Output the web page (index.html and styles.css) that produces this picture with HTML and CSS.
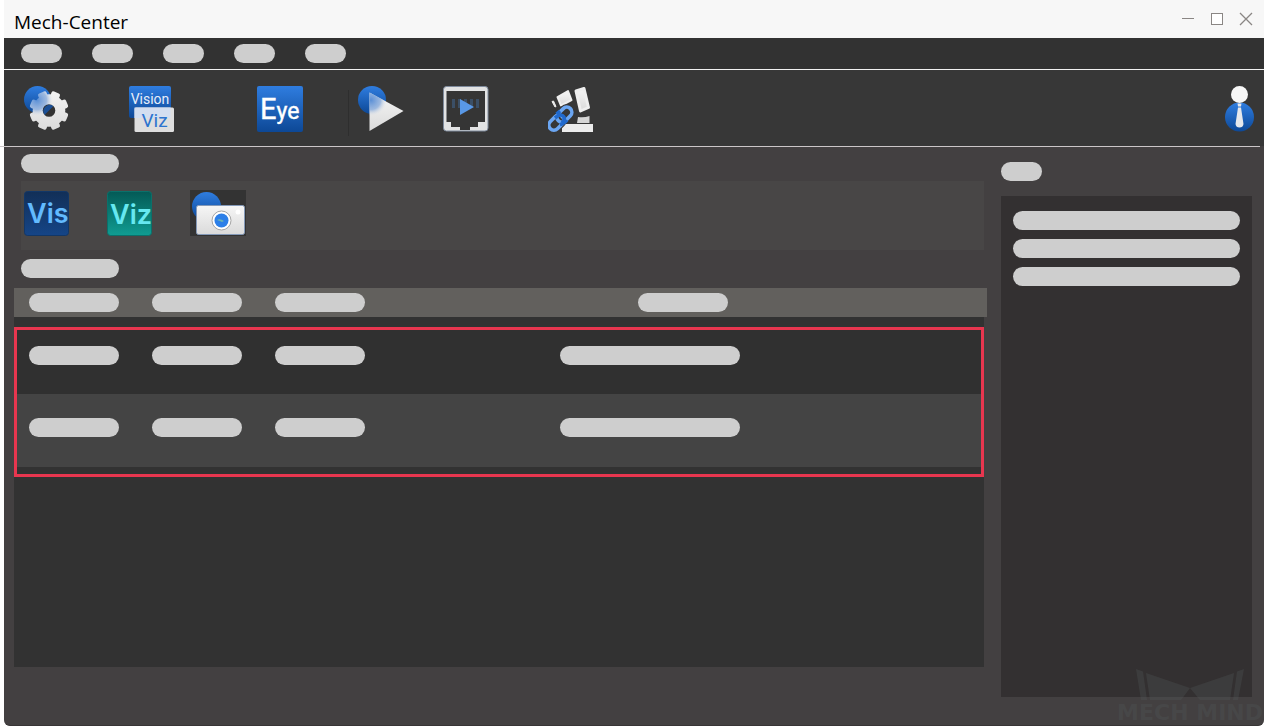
FILE: index.html
```html
<!DOCTYPE html>
<html lang="en">
<head>
    <meta charset="UTF-8">
    <meta name="viewport" content="width=device-width, initial-scale=1.0">
    <title>Mech-Center</title>
    <link rel="stylesheet" href="styles.css">
</head>
<body>
    <div class="window">
        <header class="titlebar">
            <h1>Mech-Center</h1>
            <div class="window-controls">
                <button type="button" aria-label="Minimize">
                    <svg width="14" height="14" viewBox="0 0 14 14"><path d="M1 6.500h12" stroke="#8a8684"/></svg>
                </button>
                <button type="button" aria-label="Maximize">
                    <svg width="14" height="14" viewBox="0 0 14 14"><rect x="1.500" y="1.500" width="11" height="11" fill="#fff" stroke="#8a8684"/></svg>
                </button>
                <button type="button" aria-label="Close">
                    <svg width="14" height="14" viewBox="0 0 14 14"><path d="M1 1l12 12M13 1L1 13" stroke="#8a8684" stroke-width="1.300"/></svg>
                </button>
            </div>
        </header>

        <nav class="menubar">
            <button type="button" class="pill pill-menu" aria-label="Menu 1"></button>
            <button type="button" class="pill pill-menu" aria-label="Menu 2"></button>
            <button type="button" class="pill pill-menu" aria-label="Menu 3"></button>
            <button type="button" class="pill pill-menu" aria-label="Menu 4"></button>
            <button type="button" class="pill pill-menu" aria-label="Menu 5"></button>
        </nav>

        <div class="toolbar">
            <button type="button" aria-label="Settings">
                <svg width="46" height="46" viewBox="0 0 46 46">
                    <defs>
                        <linearGradient id="blue" x1="0" y1="0" x2="0" y2="1">
                            <stop offset="0" stop-color="#2f7de0"/>
                            <stop offset="1" stop-color="#0d4896"/>
                        </linearGradient>
                        <linearGradient id="light" x1="0" y1="0" x2="0" y2="1">
                            <stop offset="0" stop-color="#f6f6f6"/>
                            <stop offset="1" stop-color="#dadada"/>
                        </linearGradient>
                        <radialGradient id="glow" gradientUnits="userSpaceOnUse" cx="13" cy="14" r="16">
                            <stop offset="0" stop-color="#5a8fd6"/>
                            <stop offset="0.600" stop-color="#7ba3da" stop-opacity="0.700"/>
                            <stop offset="1" stop-color="#e4e6ea" stop-opacity="0"/>
                        </radialGradient>
                        <rect id="tooth" x="20.500" y="5" width="9" height="10" rx="2"/>
                        <mask id="gear">
                            <g fill="#fff">
                                <circle cx="25" cy="24.500" r="16.300"/>
                                <use href="#tooth" transform="rotate(22.500 25 24.500)"/>
                                <use href="#tooth" transform="rotate(67.500 25 24.500)"/>
                                <use href="#tooth" transform="rotate(112.500 25 24.500)"/>
                                <use href="#tooth" transform="rotate(157.500 25 24.500)"/>
                                <use href="#tooth" transform="rotate(202.500 25 24.500)"/>
                                <use href="#tooth" transform="rotate(247.500 25 24.500)"/>
                                <use href="#tooth" transform="rotate(292.500 25 24.500)"/>
                                <use href="#tooth" transform="rotate(337.500 25 24.500)"/>
                            </g>
                            <circle cx="25" cy="24.500" r="6.300"/>
                        </mask>
                    </defs>
                    <circle cx="13.500" cy="13.500" r="13.500" fill="url(#blue)"/>
                    <circle cx="25" cy="24.500" r="6.500" fill="#333"/>
                    <path d="M20.500 29A6.500 6.500 0 0 1 29.500 20z" fill="#1a4f96"/>
                    <g mask="url(#gear)">
                        <rect width="46" height="46" fill="url(#light)"/>
                        <rect width="46" height="46" fill="url(#glow)"/>
                    </g>
                </svg>
            </button>
            <button type="button" aria-label="Vision and Viz">
                <svg width="46" height="46" viewBox="0 0 46 46">
                    <rect x="1" y="0" width="42" height="32" rx="2" fill="url(#blue)"/>
                    <text x="22" y="18" text-anchor="middle" font-size="14" fill="#e6eefb">Vision</text>
                    <rect x="6.500" y="21.500" width="39.500" height="24.500" rx="1.500" fill="#dedede"/>
                    <rect x="6.500" y="21.500" width="36" height="10.500" fill="#d3def0"/>
                    <text x="26.500" y="40.500" text-anchor="middle" font-size="19" fill="#2c74cf">Viz</text>
                </svg>
            </button>
            <button type="button" aria-label="Eye">
                <svg width="46" height="46" viewBox="0 0 46 46">
                    <rect x="0" y="0" width="46" height="46" rx="2" fill="url(#blue)"/>
                    <text x="3" y="33" font-size="29" fill="#fff" stroke="#fff" stroke-width=".4">E<tspan font-size="23">ye</tspan></text>
                </svg>
            </button>
            <button type="button" class="with-divider" aria-label="Run">
                <svg width="46" height="46" viewBox="0 0 46 46">
                    <circle cx="14" cy="14" r="14" fill="url(#blue)"/>
                    <path d="M11.500 6.500L45.500 25L11.500 45z" fill="url(#light)"/>
                    <path d="M11.500 6.500L32 17.500L26 37L11.500 45z" fill="url(#glow)"/>
                </svg>
            </button>
            <button type="button" aria-label="Controller">
                <svg width="46" height="46" viewBox="0 0 46 46">
                    <rect x=".5" y=".5" width="44.500" height="44.500" rx="3" fill="#e2e3e4" stroke="#7e8a9c"/>
                    <path d="M3.500 5H42V36H35V41H27V44H17V41H8V36H3.500z" fill="#353535"/>
                    <path d="M9 13h3v9H9zM15 13h3v9h-3zM21 13h3v9h-3zM27 13h3v9h-3zM33 13h3v9h-3z" fill="#3b4f66"/>
                    <path d="M17 13L31 21L17 29z" fill="#5998e6"/>
                </svg>
            </button>
            <button type="button" aria-label="Robot">
                <svg width="46" height="46" viewBox="0 0 46 46">
                    <g fill="url(#light)" stroke="#efefef" stroke-linejoin="round">
                        <path d="M28 5L36 2.500L40.500 21.500L32.500 25z" stroke-width="3"/>
                        <path d="M9.500 11L20 5L23.500 14L13 19.500z" stroke-width="2"/>
                        <path d="M4 15.500L5.500 15L8 20.500L7 21z"/>
                    </g>
                    <path d="M30 31Q36 32 41.500 30V37H29z" fill="#d6d6d6"/>
                    <rect x="14" y="38" width="31" height="8" fill="#ececec"/>
                    <g fill="none">
                        <g stroke="#373737" stroke-width="6">
                            <rect x="-8" y="-5" width="17" height="10" rx="5" transform="translate(8 37) rotate(-45)"/>
                            <rect x="-8" y="-5" width="17" height="10" rx="5" transform="translate(16 29) rotate(-45)"/>
                        </g>
                        <g stroke="#6ba6f2" stroke-width="3.600">
                            <rect x="-8" y="-5" width="17" height="10" rx="5" transform="translate(8 37) rotate(-45)"/>
                            <rect x="-8" y="-5" width="17" height="10" rx="5" transform="translate(16 29) rotate(-45)"/>
                        </g>
                        <path d="M7 32L10 29.500Q14 28 16 31Q17 34 14 37M8.500 28L12 25M12 38.500Q16 38 19 34" stroke="#2169cc" stroke-width="3.600"/>
                    </g>
                </svg>
            </button>
            <button type="button" class="user" aria-label="User">
                <svg width="30" height="46" viewBox="0 0 30 46">
                    <circle cx="14.500" cy="31" r="14.500" fill="url(#blue)"/>
                    <circle cx="14.500" cy="8.500" r="8.500" fill="#f7f7f7"/>
                    <path d="M12.500 17.500h4l-.5 3h-3zM13 21.500h3L18.500 38Q18 41.500 14.500 41.500T10.500 38z" fill="#e6e8ec"/>
                </svg>
            </button>
        </div>
        <div class="toolbar-line"></div>

        <main class="content">
            <section class="left">
                <div class="pill pill-title"></div>
                <div class="tools">
                    <button type="button" aria-label="Vis">
                        <svg width="46" height="46" viewBox="0 0 46 46">
                            <defs>
                                <linearGradient id="navy" x1="0" y1="0" x2="0" y2="1">
                                    <stop offset="0" stop-color="#122f57"/>
                                    <stop offset="1" stop-color="#154587"/>
                                </linearGradient>
                                <linearGradient id="teal" x1="0" y1="0" x2="0" y2="1">
                                    <stop offset="0" stop-color="#045a56"/>
                                    <stop offset="1" stop-color="#109c92"/>
                                </linearGradient>
                            </defs>
                            <rect x=".5" y="1.500" width="44" height="44" rx="3" fill="url(#navy)" stroke="#123767"/>
                            <text x="3" y="33" class="app-name" fill="#62baff">Vis</text>
                        </svg>
                    </button>
                    <button type="button" aria-label="Viz">
                        <svg width="46" height="46" viewBox="0 0 46 46">
                            <rect x=".5" y="1.500" width="44" height="44" rx="3" fill="url(#teal)" stroke="#0a716b"/>
                            <text x="3" y="34" class="app-name" fill="#66e8f0">Viz</text>
                        </svg>
                    </button>
                    <button type="button" aria-label="Camera">
                        <svg width="56" height="46" viewBox="0 0 56 46">
                            <rect width="56" height="46" fill="#333"/>
                            <circle cx="16.500" cy="16.500" r="14.500" fill="url(#blue)"/>
                            <rect x="6.500" y="15.500" width="48" height="29" rx="2" fill="url(#light)" stroke="#8499b8"/>
                            <circle cx="31.500" cy="30.500" r="9.500" fill="#fff" stroke="#a5a5a5"/>
                            <circle cx="31.500" cy="30.500" r="7" fill="#2c7fe8"/>
                            <path d="M27 30q3-2 7 1l-2 1q-2-1-5-2z" fill="#6cb4b0"/>
                            <circle cx="48" cy="22" r="2.500" fill="#fff"/>
                        </svg>
                    </button>
                </div>
                <div class="pill pill-title"></div>
                <div class="table-area">
                    <table>
                        <thead>
                            <tr>
                                <th><span class="pill"></span></th>
                                <th><span class="pill"></span></th>
                                <th><span class="pill"></span></th>
                                <th class="message"><span class="pill"></span></th>
                            </tr>
                        </thead>
                        <tbody>
                            <tr>
                                <td><span class="pill"></span></td>
                                <td><span class="pill"></span></td>
                                <td><span class="pill"></span></td>
                                <td class="message"><span class="pill"></span></td>
                            </tr>
                            <tr>
                                <td><span class="pill"></span></td>
                                <td><span class="pill"></span></td>
                                <td><span class="pill"></span></td>
                                <td class="message"><span class="pill"></span></td>
                            </tr>
                        </tbody>
                    </table>
                </div>
            </section>

            <aside class="right">
                <div class="pill pill-menu"></div>
                <div class="log">
                    <div class="pill"></div>
                    <div class="pill"></div>
                    <div class="pill"></div>
                </div>
            </aside>
        </main>

        <div class="watermark">
            <svg width="108" height="32" viewBox="0 0 108 32">
                <path d="M0 0L7 2.500L11 31H5zM10 4L54 19L45 31H14zM98 4L54 19L64 31H94zM108 0L101 2.500L97 31H102z"/>
            </svg>
            <span>MECH MIND</span>
        </div>
    </div>
</body>
</html>
```

FILE: styles.css
```css
* {
    box-sizing: border-box;
}
body {
    margin: 0;
    background: #fff;
    font-family: "Noto Sans", "Open Sans", sans-serif;
}
button {
    display: block;
    padding: 0;
    border: 0;
    background: none;
    cursor: pointer;
}
svg {
    display: block;
}
svg text {
    font-family: Roboto, sans-serif;
}
svg .app-name {
    font-family: Inter, sans-serif;
    font-size: 27px;
    font-weight: 600;
}
.window {
    position: relative;
    display: flex;
    flex-direction: column;
    min-height: 100vh;
    margin-left: 4px;
    background: #434041;
    border-bottom: 1px solid #383536;
    border-radius: 0 0 6px 6px;
}

/* grey placeholder bars */
.pill {
    display: block;
    width: 90px;
    height: 19px;
    border-radius: 10px;
    background: #cecece;
}
.pill-menu {
    width: 41px;
}
.pill-title {
    width: 98px;
    margin-left: 7px;
}

.titlebar {
    display: flex;
    justify-content: space-between;
    align-items: center;
    height: 38px;
    padding: 0 11px 0 10px;
    background: #f7f7f7;
}
.titlebar h1 {
    margin: 0;
    padding-top: 6px;
    font-family: "Open Sans", "Noto Sans", sans-serif;
    font-size: 19px;
    line-height: 26px;
    font-weight: 400;
    color: #000;
}
.window-controls {
    display: flex;
    gap: 15px;
}
.menubar {
    display: flex;
    align-items: center;
    gap: 30px;
    height: 32px;
    padding: 0 17px;
    background: #323232;
    border-bottom: 1px solid #f2f2f2;
}
.toolbar {
    display: grid;
    grid-template-columns: 104px 129px 101px 85px 105px 1fr auto;
    justify-items: start;
    padding: 16px 9px 14px 20px;
    background: #373737;
}
.toolbar .user {
    grid-column: 7;
}
.with-divider {
    position: relative;
}
.with-divider::before {
    content: "";
    position: absolute;
    left: -10px;
    top: 4px;
    width: 1px;
    height: 46px;
    background: #2e2e2e;
}
.toolbar-line {
    height: 1px;
    margin: 0 4px 0 -4px;
    background: #cbc6c8;
}

.content {
    flex: 1;
    display: grid;
    grid-template-columns: 1fr 251px;
    gap: 17px;
    padding: 0 12px 0 10px;
}
.left {
    display: flex;
    flex-direction: column;
    padding: 7px 0 58px;
}
.tools {
    display: flex;
    align-items: flex-start;
    gap: 37px;
    height: 69px;
    margin: 8px 0 9px 7px;
    padding: 9px 3px;
    background: #484646;
}
.table-area {
    flex: 1;
    margin-top: 10px;
    background: #323232;
}
table, thead, tbody {
    display: block;
}
thead {
    margin-right: -3px;
    padding-left: 15px;
    background: #62605d;
}
tbody {
    margin-top: 10px;
    padding-bottom: 7px;
    border: 3px solid #e8364f;
}
tr {
    display: flex;
}
tbody tr {
    padding: 16px 12px 29px;
    background: #303030;
}
tbody tr:nth-child(even) {
    padding: 24px 12px 30px;
    background: #444;
}
th, td {
    width: 123px;
    padding: 0;
}
th {
    padding: 5px 0;
}
.message {
    flex: 1;
}
th.message {
    padding-left: 240px;
}
td.message {
    padding-left: 162px;
}
td.message .pill {
    width: 180px;
}

.right {
    display: flex;
    flex-direction: column;
    padding: 15px 0 28px;
}
.log {
    flex: 1;
    display: flex;
    flex-direction: column;
    gap: 9px;
    margin-top: 15px;
    padding: 15px 12px;
    background: #333031;
}
.log .pill {
    width: 100%;
}

.watermark {
    position: absolute;
    right: 1px;
    bottom: 0;
    display: flex;
    flex-direction: column;
    align-items: center;
    font-family: "DejaVu Sans", sans-serif;
    font-weight: 700;
    font-size: 22px;
    line-height: 24px;
    color: rgba(82, 90, 90, 0.3);
    pointer-events: none;
}
.watermark path {
    fill: rgba(82, 90, 90, 0.3);
}
```
